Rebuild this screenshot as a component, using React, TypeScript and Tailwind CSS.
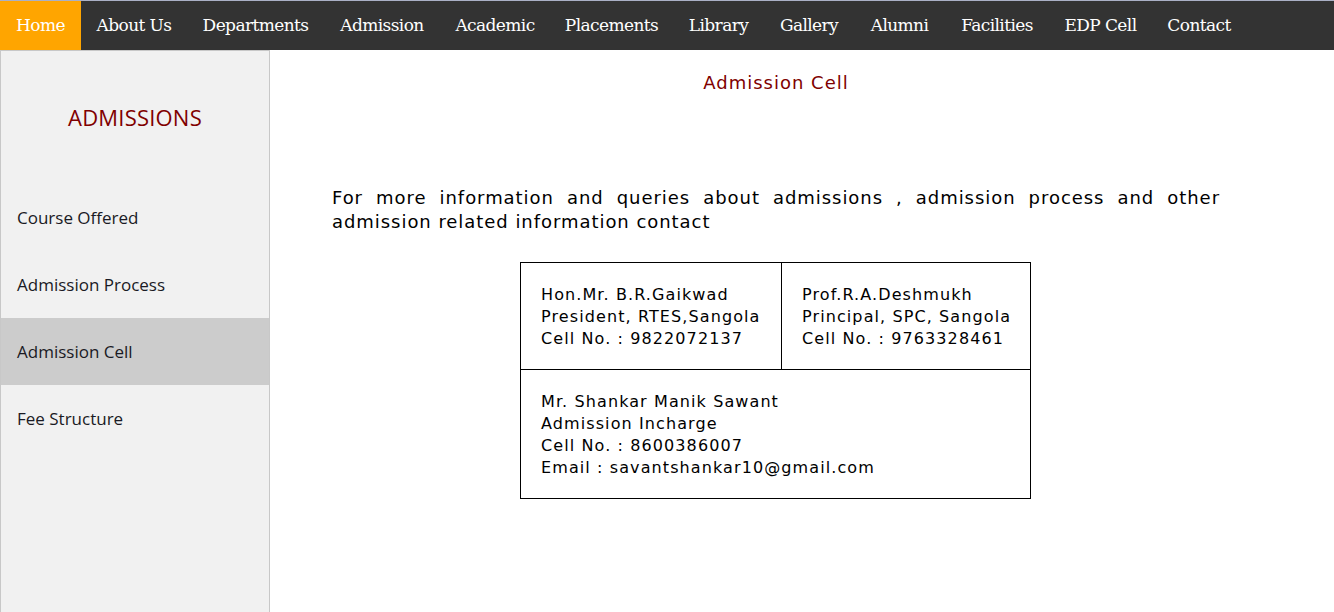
import React from "react";

const navItems: { label: string; w: string; active?: boolean }[] = [
  { label: "Home", w: "w-[81px]", active: true },
  { label: "About Us", w: "w-[106px]" },
  { label: "Departments", w: "w-[137px]" },
  { label: "Admission", w: "w-[116px]" },
  { label: "Academic", w: "w-[110px]" },
  { label: "Placements", w: "w-[123px]" },
  { label: "Library", w: "w-[91px]" },
  { label: "Gallery", w: "w-[90px]" },
  { label: "Alumni", w: "w-[91px]" },
  { label: "Facilities", w: "w-[104px]" },
  { label: "EDP Cell", w: "w-[103px]" },
  { label: "Contact", w: "w-[94px]" },
];

const sideItems = ["Course Offered", "Admission Process", "Admission Cell", "Fee Structure"];

export default function App() {
  return (
    <div className="min-h-[612px] bg-white">
      <div className="border-t border-[#aab0c6]">
        <ul className="flex h-[49px] bg-[#333333] font-['DejaVu_Serif',serif] text-[17px] text-white">
          {navItems.map((n) => (
            <li
              key={n.label}
              className={`${n.w} flex items-center justify-center whitespace-nowrap tracking-[-0.6px] pt-[1px] ${
                n.active ? "bg-[#ffa500]" : ""
              }`}
            >
              {n.label}
            </li>
          ))}
        </ul>
      </div>
      <div className="flex">
        <aside className="w-[270px] shrink-0 min-h-[562px] bg-[#f1f1f1] border border-b-0 border-[#c8c8c8] font-['Open_Sans',sans-serif]">
          <h2 className="h-[133px] pt-[51px] text-center text-[22px] font-normal leading-[30px] tracking-[0.2px] text-[#800000]">
            ADMISSIONS
          </h2>
          <ul>
            {sideItems.map((s) => (
              <li
                key={s}
                className={`h-[67px] flex items-center pl-[16px] text-[17px] text-[#1a1a24] ${
                  s === "Admission Cell" ? "bg-[#cccccc]" : ""
                }`}
              >
                {s}
              </li>
            ))}
          </ul>
        </aside>
        <main className="flex-1 pl-[62px] font-['DejaVu_Sans',Verdana,sans-serif]">
          <div className="w-[888px]">
            <h1 className="pt-[21px] text-center text-[18px] leading-[24px] tracking-[1px] text-[#800000]">
              Admission Cell
            </h1>
            <p className="mt-[91px] text-justify text-[18px] leading-[24px] tracking-[0.95px] text-black">
              For more information and queries about admissions , admission process and other
              admission related information contact
            </p>
            <div className="mt-[28px] pl-[188px]">
              <table className="w-[511px] table-fixed border-collapse text-[16px] leading-[22px] tracking-[1.1px] text-black">
                <tbody>
                  <tr>
                    <td className="w-[261px] border border-black px-[20px] pt-[21px] pb-[19px] align-top whitespace-nowrap">
                      Hon.Mr. B.R.Gaikwad
                      <br />
                      President, RTES,Sangola
                      <br />
                      Cell No. : 9822072137
                    </td>
                    <td className="border border-black px-[20px] pt-[21px] pb-[19px] align-top whitespace-nowrap">
                      Prof.R.A.Deshmukh
                      <br />
                      Principal, SPC, Sangola
                      <br />
                      Cell No. : 9763328461
                    </td>
                  </tr>
                  <tr>
                    <td colSpan={2} className="border border-black px-[20px] pt-[21px] pb-[19px] align-top">
                      Mr. Shankar Manik Sawant
                      <br />
                      Admission Incharge
                      <br />
                      Cell No. : 8600386007
                      <br />
                      Email : savantshankar10@gmail.com
                    </td>
                  </tr>
                </tbody>
              </table>
            </div>
          </div>
        </main>
      </div>
    </div>
  );
}
